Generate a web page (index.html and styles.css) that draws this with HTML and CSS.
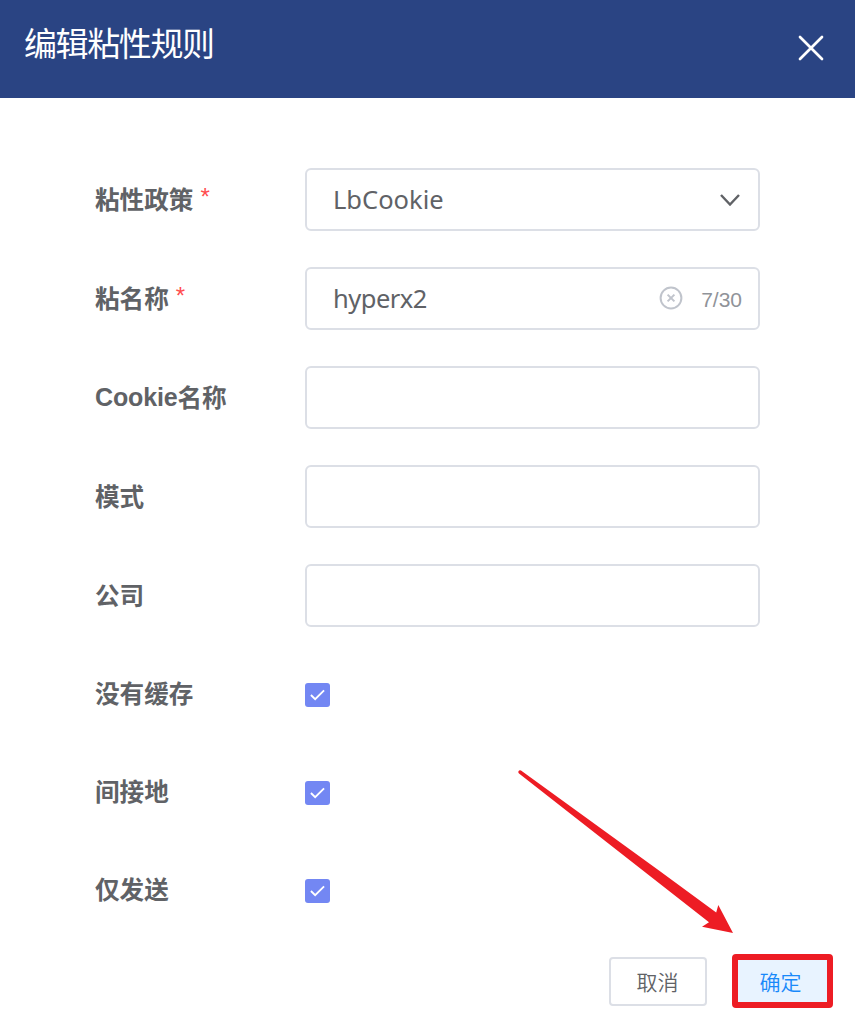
FILE: index.html
```html
<!DOCTYPE html>
<html lang="zh-CN">
<head>
<meta charset="utf-8">
<title>编辑粘性规则</title>
<link rel="stylesheet" href="styles.css">
</head>
<body>
<main class="dialog">
  <header class="header">
    <h1 class="title">编辑粘性规则</h1>
    <svg class="close" viewBox="0 0 26 26"><path d="M2 2 24 24M24 2 2 24"/></svg>
  </header>
  <form class="form">
    <div class="row"><label class="label">粘性政策<span class="required">*</span></label>
      <div class="field"><span class="value">LbCookie</span><svg class="chevron" viewBox="0 0 20 12"><path d="M1 1 10 10.500 19 1"/></svg></div></div>
    <div class="row"><label class="label">粘名称<span class="required">*</span></label>
      <div class="field"><span class="value name">hyperx2</span><svg class="clear" viewBox="0 0 24 24"><circle cx="12" cy="12" r="10.4"/><path d="M8.6 8.6 15.4 15.4M15.4 8.6 8.6 15.4"/></svg><span class="count">7/30</span></div></div>
    <div class="row"><label class="label"><span class="latin">Cookie</span>名称</label><div class="field"></div></div>
    <div class="row"><label class="label">模式</label><div class="field"></div></div>
    <div class="row"><label class="label">公司</label><div class="field"></div></div>
    <div class="row check-row"><label class="label">没有缓存</label><span class="checkbox"><svg class="tick" viewBox="0 0 16 12"><path d="M1 6 5.500 10.500 15 1"/></svg></span></div>
    <div class="row check-row"><label class="label">间接地</label><span class="checkbox"><svg class="tick" viewBox="0 0 16 12"><path d="M1 6 5.500 10.500 15 1"/></svg></span></div>
    <div class="row check-row"><label class="label">仅发送</label><span class="checkbox"><svg class="tick" viewBox="0 0 16 12"><path d="M1 6 5.500 10.500 15 1"/></svg></span></div>
  </form>
  <footer class="footer">
    <button class="button" type="button">取消</button>
    <button class="button confirm" type="button">确定</button>
  </footer>
  <svg class="arrow" viewBox="0 0 216 166"><path d="M.4 1.500Q1.200-.2 3 .5L142 101.200 198.200 142.400 200.300 135 215 163 184 156.700 191 152.300 1 3.500Q0 2.600 .4 1.500Z"/></svg>
</main>
</body>
</html>
```
FILE: styles.css
```css
* { box-sizing: border-box; }
body { margin: 0; background: #fff; font-family: "Liberation Sans", "Noto Sans CJK SC", sans-serif; color: #606266; }
.dialog { position: relative; width: 855px; height: 1030px; overflow: hidden; }
.header { height: 98px; padding: 0 31px 0 24px; background: #2a4483; display: flex; justify-content: space-between; align-items: center; }
.title { margin: 0 0 14px; color: #fff; font: 400 33px/48px "Noto Sans CJK SC", sans-serif; letter-spacing: -1.4px; }
.close { width: 26px; height: 26px; margin-bottom: 2px; fill: none; stroke: #fff; stroke-width: 2.7; stroke-linecap: round; }
.form { padding: 70px 95px 0; }
.row { display: flex; align-items: center; height: 63px; margin-bottom: 36px; }
.check-row { margin-bottom: 35px; }
.label { display: flex; align-items: center; width: 210px; flex: none; padding-top: 2px; font-size: 24.6px; line-height: 36px; font-weight: 700; }
.check-row .label { padding-top: 1px; }
.latin { font-size: 25px; letter-spacing: -.15px; margin-bottom: 3px; }
.required { margin: 0 0 7px 7px; color: #ff4d4f; font-weight: 400; font-size: 24px; }
.field { flex: 1; height: 63px; border: 2px solid #dcdfe6; border-radius: 6px; display: flex; align-items: center; padding: 0 16px 0 26px; }
.value { flex: 1; padding-bottom: 2px; font-family: "Noto Sans", sans-serif; font-size: 25.500px; line-height: 36px; }
.name { letter-spacing: -.5px; }
.chevron { width: 20px; height: 12px; margin: 1px 2px 0 0; fill: none; stroke: #606266; stroke-width: 2.4; }
.clear { width: 24px; height: 24px; margin: -2px 18px 0 0; fill: none; stroke: #c0c4cc; stroke-width: 2; }
.count { font-size: 21px; line-height: 24px; color: #909399; padding-top: 2px; }
.checkbox { width: 25px; height: 24px; background: #7387f3; border-radius: 3px; display: flex; align-items: center; justify-content: center; }
.tick { width: 15px; height: 12px; fill: none; stroke: #fff; stroke-width: 2; }
.footer { display: flex; justify-content: flex-end; align-items: center; gap: 25px; padding-right: 22px; margin-top: -3px; }
.button { width: 98px; height: 49px; padding: 0 1px 1px 0; border: 2px solid #dcdfe6; border-radius: 4px; background: #fff; color: #606266; font: 350 21px/28px "Noto Sans CJK SC", sans-serif; }
.confirm { width: 101px; height: 54px; padding-right: 4px; border: 6px solid #ed1c24; background: #e8f3ff; color: #1989fa; }
.arrow { position: absolute; left: 518px; top: 770px; width: 216px; height: 166px; fill: #ed1c24; }
```
